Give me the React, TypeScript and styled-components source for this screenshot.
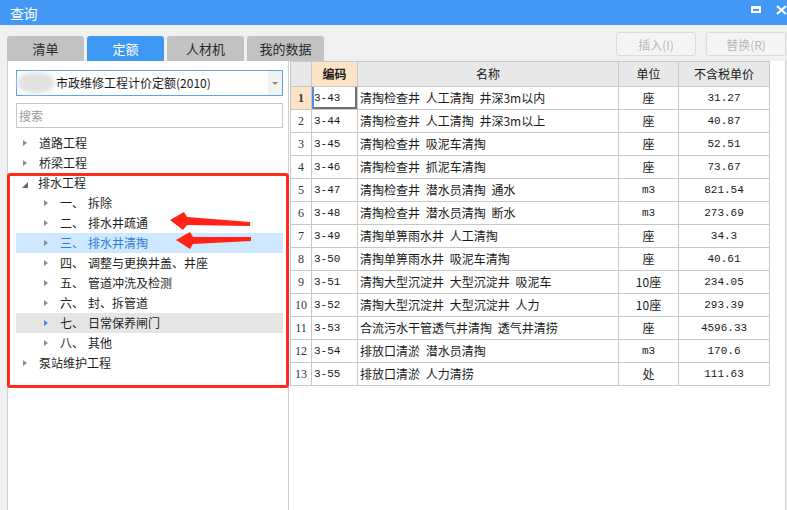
import styled, { createGlobalStyle } from "styled-components";

const GlobalStyle = createGlobalStyle`
    body {
        margin: 0;
        font-family: "Noto Sans CJK SC", "Liberation Sans", sans-serif;
        background: #f0f0f0;
    }
`

const Window = styled.div`
    position: relative;
    width: 787px;
    height: 510px;
    overflow: hidden;
    background: #f0f0f0;
    display: flex;
    flex-direction: column;
`

const TitleBar = styled.div`
    height: 25px;
    flex: none;
    background: #4499f7;
    display: flex;
    align-items: center;
    padding: 0 0 0 10px;
    color: #fff;
`

const TitleText = styled.span`
    font-size: 14px;
    line-height: 1;
    letter-spacing: -0.5px;
`

const WinButtons = styled.div`
    margin-left: auto;
    display: flex;
    align-items: center;
    gap: 15px;
    margin-top: -6px;
`

const MaxIcon = styled.span`
    width: 6px;
    height: 2px;
    border: 2px solid #fff;
    border-top-width: 3px;
`

const TopRow = styled.div`
    height: 36px;
    flex: none;
    display: flex;
    padding: 0 1px 0 7px;
`

const Tabs = styled.div`
    align-self: flex-end;
    display: flex;
    gap: 3px;
`

const Tab = styled.div<{ $active?: boolean }>`
    width: 77px;
    height: 25px;
    border-radius: 3px 3px 0 0;
    background: ${p => p.$active ? '#3c98f2' : '#c2c2c2'};
    color: ${p => p.$active ? '#fff' : '#2a2a2a'};
    font-size: 13px;
    display: flex;
    align-items: center;
    justify-content: center;
`

const Actions = styled.div`
    margin-left: auto;
    margin-top: 7px;
    display: flex;
    gap: 10px;
    align-self: flex-start;
`

const ActionButton = styled.button`
    width: 80px;
    height: 24px;
    box-sizing: border-box;
    border: 1px solid #dcdcdc;
    border-radius: 3px;
    background: #f5f5f5;
    color: #b8b8b8;
    font-family: "Noto Sans CJK SC", "Liberation Sans", sans-serif;
    font-size: 12px;
    padding: 0;
`

const Body = styled.div`
    flex: 1;
    display: flex;
    margin-left: 7px;
    min-height: 0;
`

const LeftPanel = styled.div`
    width: 282px;
    flex: none;
    box-sizing: border-box;
    background: #fff;
    border-left: 1px solid #d0d0d0;
    border-right: 1px solid #d0d0d0;
    padding: 9px 5px 0 8px;
    display: flex;
    flex-direction: column;
`

const Select = styled.div`
    height: 26px;
    box-sizing: border-box;
    border: 1px solid #5fa3ea;
    display: flex;
    align-items: center;
    font-size: 12px;
    color: #1a1a1a;
`

const Blur = styled.span`
    width: 38px;
    height: 22px;
    margin-right: 1px;
    border-radius: 50%;
    background: #e2e2e2;
    filter: blur(2px);
`

const SelectText = styled.span`
    flex: 1;
    line-height: 1;
`

const DropButton = styled.span`
    width: 14px;
    align-self: stretch;
    background: #f2f2f2;
    display: flex;
    align-items: center;
    justify-content: center;
    &::after {
        content: "";
        border-left: 3px solid transparent;
        border-right: 3px solid transparent;
        border-top: 3px solid #8a8a8a;
    }
`

const Search = styled.div`
    margin-top: 7px;
    height: 25px;
    box-sizing: border-box;
    border: 1px solid #c8c8c8;
    font-size: 12px;
    color: #9a9a9a;
    display: flex;
    align-items: center;
    padding-left: 2px;
`

const Tree = styled.div`
    margin-top: 5px;
    display: flex;
    flex-direction: column;
`

const TreeRow = styled.div<{ $level: number; $state?: 'selected' | 'hover' }>`
    height: 20px;
    display: flex;
    align-items: center;
    padding-left: ${p => p.$level === 1 ? 6 : 27}px;
    font-size: 12px;
    line-height: 1;
    color: ${p => p.$state === 'selected' ? '#2f7bd6' : '#1e1e1e'};
    background: ${p => p.$state === 'selected' ? '#cde8ff' : p.$state === 'hover' ? '#e5e5e5' : 'transparent'};
`

const Caret = styled.span<{ $open?: boolean; $blue?: boolean }>`
    width: 0;
    height: 0;
    margin-right: ${p => p.$open ? 10 : 12}px;
    ${p => p.$open ? `
        border-left: 6px solid transparent;
        border-bottom: 6px solid #666;
        margin-top: 3px;
    ` : `
        border-top: 3.5px solid transparent;
        border-bottom: 3.5px solid transparent;
        border-left: 4px solid ${p.$blue ? '#3f8fe8' : '#8c8c8c'};
        margin-left: 1px;
    `}
`

const Ordinal = styled.span`
    width: 28px;
`

const RightPanel = styled.div`
    flex: 1;
    background: #fff;
    padding-left: 1px;
    border-right: 1px solid #d0d0d0;
    margin-right: 1px;
`

const Table = styled.table`
    border-collapse: collapse;
    table-layout: fixed;
    width: 479px;
    border: 1px solid #c0c0c0;
`

const Th = styled.th<{ $peach?: boolean }>`
    height: 24px;
    padding: 0;
    border: 1px solid #c8c8c8;
    background: ${p => p.$peach ? '#fde4c6' : '#e8e8e8'};
    font-size: 12px;
    font-weight: ${p => p.$peach ? 700 : 400};
    color: #1a1a1a;
    line-height: 1;
`

const Td = styled.td<{ $align?: 'left' | 'center'; $mono?: boolean; $active?: boolean; $peach?: boolean }>`
    height: 22px;
    padding: 0 ${p => p.$align === 'left' ? '0 0 2px' : '0'};
    border: 1px solid #c8c8c8;
    text-align: ${p => p.$align || 'center'};
    font-family: ${p => p.$mono ? '"Liberation Mono", "Noto Sans CJK SC", monospace' : '"Noto Sans CJK SC", "Liberation Sans", sans-serif'};
    font-size: ${p => p.$mono ? '11px' : '12px'};
    color: #1a1a1a;
    line-height: 1;
    white-space: nowrap;
    overflow: hidden;
    word-spacing: 3px;
    background: ${p => p.$peach ? '#fde4c6' : '#fff'};
    box-shadow: ${p => p.$active ? 'inset 2px 0 0 #4a90e2, inset -2px 0 0 #707070, inset 0 -2px 0 #707070' : 'none'};
`

const RowNum = styled(Td)<{ $bold?: boolean }>`
    font-family: "Liberation Serif", serif;
    font-weight: ${p => p.$bold ? 700 : 400};
    color: #333;
`

const Highlight = styled.div`
    position: absolute;
    left: 7px;
    top: 173px;
    width: 282px;
    height: 215px;
    box-sizing: border-box;
    border: 3px solid #ff2a1e;
    border-radius: 3px;
    pointer-events: none;
`

const ArrowLayer = styled.svg`
    position: absolute;
    left: 0;
    top: 0;
    pointer-events: none;
`

const tree: { label: string; level: number; ord?: string; open?: boolean; state?: 'selected' | 'hover' }[] = [
    { label: '道路工程', level: 1 },
    { label: '桥梁工程', level: 1 },
    { label: '排水工程', level: 1, open: true },
    { label: '拆除', ord: '一、', level: 2 },
    { label: '排水井疏通', ord: '二、', level: 2 },
    { label: '排水井清掏', ord: '三、', level: 2, state: 'selected' },
    { label: '调整与更换井盖、井座', ord: '四、', level: 2 },
    { label: '管道冲洗及检测', ord: '五、', level: 2 },
    { label: '封、拆管道', ord: '六、', level: 2 },
    { label: '日常保养闸门', ord: '七、', level: 2, state: 'hover' },
    { label: '其他', ord: '八、', level: 2 },
    { label: '泵站维护工程', level: 1 },
];

const rows = [
    ['3-43', '清掏检查井 人工清掏 井深3m以内', '座', '31.27'],
    ['3-44', '清掏检查井 人工清掏 井深3m以上', '座', '40.87'],
    ['3-45', '清掏检查井 吸泥车清掏', '座', '52.51'],
    ['3-46', '清掏检查井 抓泥车清掏', '座', '73.67'],
    ['3-47', '清掏检查井 潜水员清掏 通水', 'm3', '821.54'],
    ['3-48', '清掏检查井 潜水员清掏 断水', 'm3', '273.69'],
    ['3-49', '清掏单箅雨水井 人工清掏', '座', '34.3'],
    ['3-50', '清掏单箅雨水井 吸泥车清掏', '座', '40.61'],
    ['3-51', '清掏大型沉淀井 大型沉淀井 吸泥车', '10座', '234.05'],
    ['3-52', '清掏大型沉淀井 大型沉淀井 人力', '10座', '293.39'],
    ['3-53', '合流污水干管透气井清掏 透气井清捞', '座', '4596.33'],
    ['3-54', '排放口清淤 潜水员清掏', 'm3', '170.6'],
    ['3-55', '排放口清淤 人力清捞', '处', '111.63'],
];

export default function App() {
    return (
        <>
            <GlobalStyle />
            <Window>
                <TitleBar>
                    <TitleText>查询</TitleText>
                    <WinButtons>
                        <MaxIcon />
                        <svg width="11" height="10" viewBox="0 0 11 10">
                            <path d="M1 1 L10 9 M10 1 L1 9" stroke="#fff" strokeWidth="2.2" />
                        </svg>
                    </WinButtons>
                </TitleBar>

                <TopRow>
                    <Tabs>
                        <Tab>清单</Tab>
                        <Tab $active>定额</Tab>
                        <Tab>人材机</Tab>
                        <Tab>我的数据</Tab>
                    </Tabs>
                    <Actions>
                        <ActionButton disabled>插入(I)</ActionButton>
                        <ActionButton disabled>替换(R)</ActionButton>
                    </Actions>
                </TopRow>

                <Body>
                    <LeftPanel>
                        <Select>
                            <Blur />
                            <SelectText>市政维修工程计价定额(2010)</SelectText>
                            <DropButton />
                        </Select>
                        <Search>搜索</Search>
                        <Tree>
                            {tree.map(n => (
                                <TreeRow key={n.label} $level={n.level} $state={n.state}>
                                    <Caret $open={n.open} $blue={n.state === 'hover'} />
                                    {n.ord && <Ordinal>{n.ord}</Ordinal>}
                                    {n.label}
                                </TreeRow>
                            ))}
                        </Tree>
                    </LeftPanel>

                    <RightPanel>
                        <Table>
                            <colgroup>
                                <col style={{ width: 21 }} />
                                <col style={{ width: 46 }} />
                                <col style={{ width: 261 }} />
                                <col style={{ width: 60 }} />
                                <col style={{ width: 91 }} />
                            </colgroup>
                            <thead>
                                <tr>
                                    <Th />
                                    <Th $peach>编码</Th>
                                    <Th>名称</Th>
                                    <Th>单位</Th>
                                    <Th>不含税单价</Th>
                                </tr>
                            </thead>
                            <tbody>
                                {rows.map((r, i) => (
                                    <tr key={r[0]}>
                                        <RowNum $peach={i === 0} $bold={i === 0}>{i + 1}</RowNum>
                                        <Td $align="left" $mono $active={i === 0}>{r[0]}</Td>
                                        <Td $align="left">{r[1]}</Td>
                                        <Td $mono={r[2] === 'm3'}>{r[2]}</Td>
                                        <Td $mono>{r[3]}</Td>
                                    </tr>
                                ))}
                            </tbody>
                        </Table>
                    </RightPanel>
                </Body>

                <Highlight />
                <ArrowLayer width="787" height="510">
                    <polygon points="170,220 184,212 187,217 250,222 250,226 187,225 183,230" fill="#ff2216" />
                    <polygon points="176,240 190,232 193,237 251,237 251,241 193,244 190,249" fill="#ff2216" />
                </ArrowLayer>
            </Window>
        </>
    );
}
